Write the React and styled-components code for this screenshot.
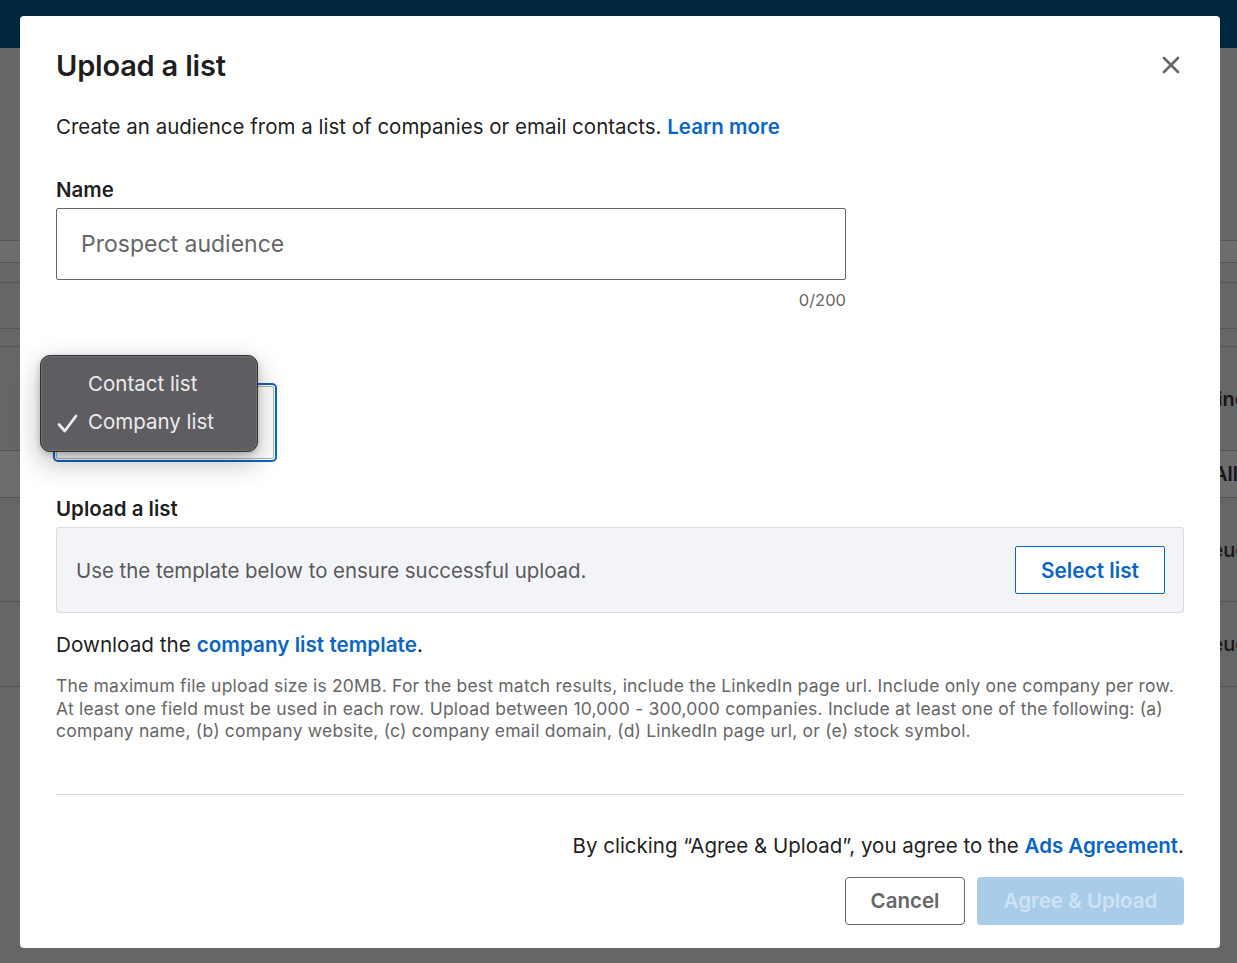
import React from 'react'
import styled, { createGlobalStyle } from 'styled-components'

const GlobalStyle = createGlobalStyle`
  * { box-sizing: border-box; }
  html, body { margin: 0; padding: 0; height: 100%; overflow: hidden; }
  body {
    font-family: Inter, "Noto Sans", "Liberation Sans", sans-serif;
    color: rgba(0, 0, 0, 0.9);
    background: #666667;
  }
`

const bgRows = [
  { h: 193 },
  { h: 22, light: true },
  { h: 20 },
  { h: 46 },
  { h: 18 },
  { h: 104, text: 'Line', pad: 1206 },
  { h: 47, light: true, text: 'All', pad: 1213 },
  { h: 104, text: 'Queue', pad: 1184, thin: true },
  { h: 85, text: 'Queue', pad: 1184, thin: true },
  { h: 280 },
]

const UploadListModal = () => {
  return (
    <>
      <GlobalStyle />
      <Page>
        <NavBar />
        {bgRows.map((r, i) => (
          <BgRow key={i} h={r.h} light={r.light} pad={r.pad} thin={r.thin}>
            {r.text}
          </BgRow>
        ))}
      </Page>

      <Modal>
        <Header>
          <Title>Upload a list</Title>
          <CloseButton aria-label="Close">
            <svg width="18" height="18" viewBox="0 0 18 18">
              <path d="M2 2 L16 16 M16 2 L2 16" stroke="#666" strokeWidth="2.6" strokeLinecap="round" />
            </svg>
          </CloseButton>
        </Header>

        <Description>
          Create an audience from a list of companies or email contacts. <Link>Learn more</Link>
        </Description>

        <Label top={35}>Name</Label>
        <TextInput placeholder="Prospect audience" />
        <Counter>0/200</Counter>

        <Label top={43}>List type</Label>
        <SelectWrap>
          <SelectBox>Company list</SelectBox>
          <PopupMenu>
            <MenuItem>Contact list</MenuItem>
            <MenuItem checked>
              <Check>
                <svg width="21" height="19" viewBox="0 0 21 19">
                  <path d="M2 10.5 L7.8 17 L19 2" fill="none" stroke="#ededed" strokeWidth="2.8" strokeLinecap="round" strokeLinejoin="round" />
                </svg>
              </Check>
              Company list
            </MenuItem>
          </PopupMenu>
        </SelectWrap>

        <Label top={36}>Upload a list</Label>
        <UploadBox>
          <UploadHint>Use the template below to ensure successful upload.</UploadHint>
          <OutlineButton>Select list</OutlineButton>
        </UploadBox>

        <DownloadLine>
          Download the <Link>company list template</Link>.
        </DownloadLine>
        <FinePrint>
          The maximum file upload size is 20MB. For the best match results, include the LinkedIn page url. Include only one company per row.
          <br />
          At least one field must be used in each row. Upload between 10,000 - 300,000 companies. Include at least one of the following: (a)
          <br />
          company name, (b) company website, (c) company email domain, (d) LinkedIn page url, or (e) stock symbol.
        </FinePrint>

        <Divider />

        <Agreement>
          By clicking “Agree &amp; Upload”, you agree to the <Link>Ads Agreement</Link>.
        </Agreement>
        <Actions>
          <SecondaryButton>Cancel</SecondaryButton>
          <PrimaryButton disabled>Agree &amp; Upload</PrimaryButton>
        </Actions>
      </Modal>
    </>
  )
}

export default UploadListModal

const Page = styled.div`
  display: flex;
  flex-direction: column;
  width: 100%;
  height: 100vh;
  background: #666667;
`

const NavBar = styled.div`
  height: 48px;
  flex-shrink: 0;
  background: #01263f;
`

const BgRow = styled.div`
  height: ${(p) => p.h}px;
  flex-shrink: 0;
  display: flex;
  align-items: center;
  padding-left: ${(p) => p.pad || 0}px;
  border-bottom: 1px solid #555556;
  background: ${(p) => (p.light ? '#6d6d6e' : 'transparent')};
  font-size: 20px;
  font-weight: ${(p) => (p.thin ? 500 : 600)};
  color: #161616;
  white-space: nowrap;
`

const Modal = styled.div`
  position: fixed;
  top: 16px;
  left: 20px;
  width: 1200px;
  height: 932px;
  display: flex;
  flex-direction: column;
  padding: 0 36px;
  background: #fff;
  border-radius: 4px;
`

const Header = styled.div`
  display: flex;
  align-items: center;
  justify-content: space-between;
  padding-top: 32px;
  height: 68px;
`

const Title = styled.h2`
  margin: 0;
  font-size: 29px;
  line-height: 36px;
  font-weight: 600;
  letter-spacing: -0.2px;
  color: rgba(0, 0, 0, 0.9);
`

const CloseButton = styled.button`
  display: flex;
  align-items: center;
  justify-content: center;
  width: 30px;
  height: 30px;
  margin-right: -2px;
  margin-top: -3px;
  padding: 0;
  border: 0;
  background: none;
  cursor: pointer;
`

const Description = styled.p`
  margin: 29px 0 0;
  font-size: 20.5px;
  line-height: 28px;
  color: rgba(0, 0, 0, 0.9);
`

const Link = styled.a`
  color: #0a66c2;
  font-weight: 600;
  cursor: pointer;
`

const Label = styled.label`
  display: block;
  margin-top: ${(p) => p.top}px;
  font-size: 20.5px;
  line-height: 28px;
  font-weight: 600;
  color: rgba(0, 0, 0, 0.9);
`

const TextInput = styled.input`
  margin-top: 4px;
  width: 790px;
  height: 72px;
  padding: 0 24px;
  border: 1px solid #666;
  border-radius: 2px;
  font-family: inherit;
  font-size: 23px;
  color: rgba(0, 0, 0, 0.9);
  outline: none;

  &::placeholder {
    color: #666;
  }
`

const Counter = styled.div`
  width: 790px;
  margin-top: 10px;
  text-align: right;
  font-size: 16.5px;
  line-height: 20px;
  color: #666;
`

const SelectWrap = styled.div`
  position: relative;
  margin-top: 5px;
  width: 218px;
  height: 73px;
`

const SelectBox = styled.div`
  display: flex;
  align-items: center;
  height: 100%;
  padding: 0 20px;
  border: 1px solid #b5b5b5;
  border-radius: 2px;
  outline: 2px solid #0a66c2;
  outline-offset: 1px;
  font-size: 20px;
  color: rgba(0, 0, 0, 0.9);
`

const PopupMenu = styled.div`
  position: absolute;
  top: -31px;
  left: -16px;
  width: 218px;
  height: 97px;
  display: flex;
  flex-direction: column;
  justify-content: center;
  gap: 10px;
  padding: 0 0 2px;
  background: #5f5c62;
  border: 1px solid #2f2e31;
  border-radius: 10px;
  box-shadow: inset 0 0 0 1px rgba(255, 255, 255, 0.12), 0 10px 28px rgba(0, 0, 0, 0.28),
    0 2px 6px rgba(0, 0, 0, 0.2);
`

const MenuItem = styled.div`
  position: relative;
  display: flex;
  align-items: center;
  height: 28px;
  padding-left: 47px;
  font-size: 20.5px;
  color: #ececec;
`

const Check = styled.span`
  position: absolute;
  left: 16px;
  top: 6px;
  display: flex;
`

const UploadBox = styled.div`
  display: flex;
  align-items: center;
  justify-content: space-between;
  margin-top: 4px;
  height: 86px;
  padding: 0 18px 0 19px;
  background: #f3f4f8;
  border: 1px solid #d9d9de;
  border-radius: 3px;
`

const UploadHint = styled.span`
  font-size: 20.4px;
  color: #595959;
`

const OutlineButton = styled.button`
  height: 48px;
  width: 150px;
  border: 1px solid #0a66c2;
  border-radius: 2px;
  background: #fff;
  font-family: inherit;
  font-size: 20.8px;
  font-weight: 600;
  color: #0a66c2;
  cursor: pointer;
`

const DownloadLine = styled.p`
  margin: 18px 0 0;
  font-size: 20.7px;
  line-height: 28px;
  color: rgba(0, 0, 0, 0.9);
`

const FinePrint = styled.p`
  margin: 16px 0 0;
  font-size: 17.5px;
  line-height: 22.5px;
  letter-spacing: 0.2px;
  color: #666;
  white-space: nowrap;
`

const Divider = styled.hr`
  margin: 51px 0 0;
  border: 0;
  border-top: 1px solid #dcdcdc;
`

const Agreement = styled.p`
  margin: 37px 0 0;
  text-align: right;
  font-size: 20.5px;
  line-height: 28px;
  color: rgba(0, 0, 0, 0.9);
`

const Actions = styled.div`
  display: flex;
  justify-content: flex-end;
  gap: 12px;
  margin-top: 17px;
`

const SecondaryButton = styled.button`
  height: 48px;
  width: 120px;
  border: 1px solid #666;
  border-radius: 4px;
  background: #fff;
  font-family: inherit;
  font-size: 20.5px;
  font-weight: 600;
  color: #666;
  cursor: pointer;
`

const PrimaryButton = styled.button`
  height: 48px;
  width: 207px;
  border: 0;
  border-radius: 4px;
  background: #a9cce9;
  font-family: inherit;
  font-size: 20.5px;
  font-weight: 600;
  color: #cde2f4;
`
